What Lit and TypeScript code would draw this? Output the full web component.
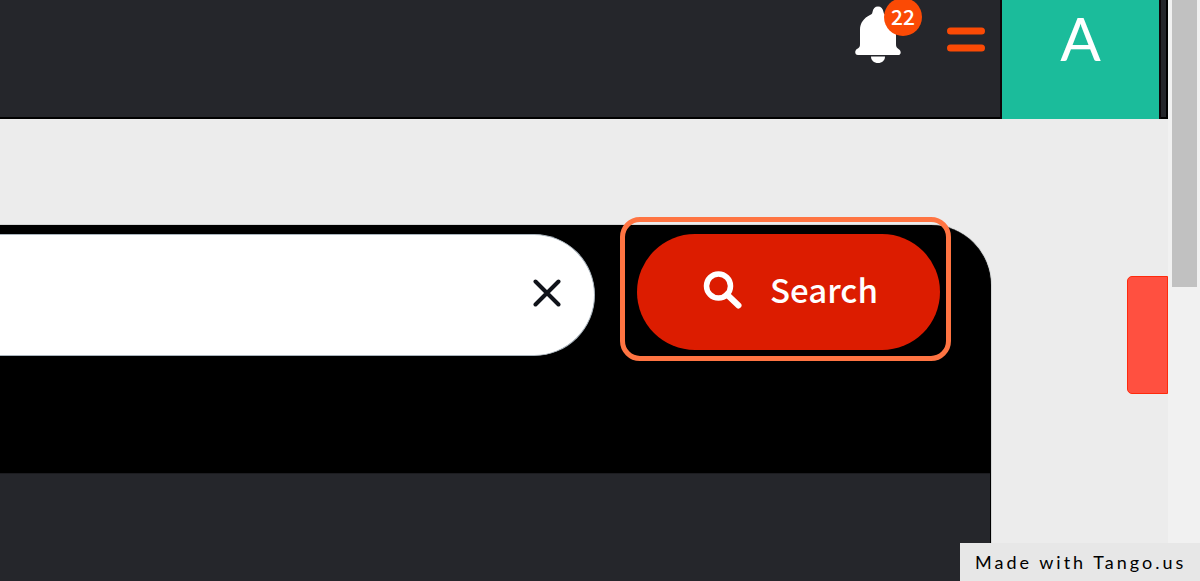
import { LitElement, html, css } from "lit";
import { customElement, property, state } from "lit/decorators.js";

@customElement("top-bar")
class TopBar extends LitElement {
  @property({ type: Number }) notifications = 22;
  @property() initial = "A";

  static styles = css`
    :host { display: block; }
    .bar {
      display: flex;
      justify-content: flex-end;
      height: 119px;
      box-sizing: border-box;
      padding-right: 5px;
      background: #25262b;
      border-bottom: 2px solid #000;
      border-right: 2px solid #000;
    }
    button {
      border: 0;
      padding: 0;
      margin: 0;
      background: none;
      cursor: pointer;
    }
    .bell {
      position: relative;
      width: 46px;
      height: 64px;
      margin-right: 46px;
    }
    .menu { width: 38px; height: 78px; margin-right: 15px; }
    svg { display: block; }
    .bell svg { margin-top: 6px; }
    .badge {
      position: absolute;
      left: 29px;
      top: -2px;
      width: 38px;
      height: 38px;
      border-radius: 50%;
      background: #fb4a05;
      color: #fff;
      font: 500 21px/36px "Noto Sans CJK SC", sans-serif;
      text-align: center;
    }
    .avatar {
      width: 161px;
      height: 119px;
      box-sizing: border-box;
      border: solid #0d0508;
      border-width: 0 2px;
      background: #1bbc9b;
      color: #fff;
      font: 400 60px/76px Lato, sans-serif;
      display: flex;
      justify-content: center;
      align-items: flex-start;
    }
  `;

  render() {
    return html`
      <header class="bar">
        <button class="bell" aria-label="Notifications">
          <svg width="46" height="58" viewBox="0 0 46 58" fill="#fff" aria-hidden="true">
            <path d="M23 0.500c-3 0-5 2-5.500 5.500-.3 1.800-1 2.300-2.500 3C9 12 5 17 5 23.500V38c0 2.500-.5 3.800-3 5C-.5 44.500-.5 49 3 49h40c3.500 0 3.500-4.500.5-6C41.500 41.800 41 40.500 41 38V23.500C41 17 37 12 31 9c-1.500-.7-2.200-1.200-2.500-3C28 2.500 26 .5 23 .5z" />
            <path d="M16 50.500h14c0 4-3 6.500-7 6.500s-7-2.500-7-6.500z" />
          </svg>
          <span class="badge">${this.notifications}</span>
        </button>
        <button class="menu" aria-label="Menu">
          <svg width="38" height="78" viewBox="0 0 38 78" stroke="#fb4a05" stroke-width="7" stroke-linecap="round" aria-hidden="true">
            <path d="M3.500 31h31M3.500 48h31" />
          </svg>
        </button>
        <button class="avatar" aria-label="Account ${this.initial}">${this.initial}</button>
      </header>
    `;
  }
}

@customElement("search-card")
class SearchCard extends LitElement {
  @state() private query = "";

  static styles = css`
    :host { display: flex; }
    .card {
      flex: 1;
      display: flex;
      flex-direction: column;
      background: #000;
      border-radius: 0 60px 0 0;
      border-right: 1px solid #000;
      box-shadow: 0 0 0 1px #d4d6d6;
      overflow: hidden;
    }
    .row {
      display: flex;
      align-items: flex-start;
      gap: 42px;
      height: 248px;
      box-sizing: border-box;
      padding: 9px 50px 0 0;
    }
    .field {
      flex: 1;
      display: flex;
      align-items: center;
      height: 122px;
      box-sizing: border-box;
      padding-right: 33px;
      background: #fff;
      border: 1px solid #a9b4bd;
      border-left: 0;
      border-radius: 0 61px 61px 0;
    }
    input {
      flex: 1;
      min-width: 0;
      height: 100px;
      border: 0;
      padding: 0 24px;
      outline: 0;
      background: none;
      font: 33px "Noto Sans CJK SC", sans-serif;
    }
    button { border: 0; padding: 0; cursor: pointer; }
    svg { display: block; }
    .clear { background: none; padding-bottom: 4px; }
    .search {
      display: flex;
      align-items: center;
      gap: 28px;
      width: 303px;
      height: 116px;
      padding-left: 66px;
      border-radius: 58px;
      background: #dc1c00;
      color: #fff;
      font: 500 33px/48px "Noto Sans CJK SC", sans-serif;
    }
    .search span { padding-bottom: 6px; }
    .search svg { margin-bottom: 4px; }
    .results { flex: 1; background: #25262b; border-top: 1px solid #1c1c20; }
  `;

  render() {
    return html`
      <section class="card">
        <form class="row" @submit=${(e: Event) => e.preventDefault()}>
          <div class="field">
            <input
              type="text"
              aria-label="Search"
              .value=${this.query}
              @input=${(e: Event) => (this.query = (e.target as HTMLInputElement).value)}
            />
            <button class="clear" type="button" aria-label="Clear" @click=${() => (this.query = "")}>
              <svg width="28" height="28" viewBox="0 0 28 28" stroke="#10131a" stroke-width="4" stroke-linecap="round" aria-hidden="true">
                <path d="M2.500 2.500l23 23M25.500 2.500l-23 23" />
              </svg>
            </button>
          </div>
          <button class="search" type="submit">
            <svg width="39" height="38" viewBox="0 0 39 38" fill="none" stroke="#fff" aria-hidden="true">
              <circle cx="15.500" cy="15" r="12" stroke-width="5.500" />
              <path d="M24 23.500L35.500 34.500" stroke-width="6" stroke-linecap="round" />
            </svg>
            <span>Search</span>
          </button>
        </form>
        <div class="results"></div>
      </section>
    `;
  }
}

@customElement("app-root")
class AppRoot extends LitElement {
  static styles = css`
    :host {
      display: grid;
      grid-template-columns: 1fr 32px;
      min-height: 100vh;
      position: relative;
      overflow: hidden;
      background: #ececec;
    }
    .page { display: flex; flex-direction: column; min-width: 0; }
    .content { flex: 1; display: flex; padding-top: 106px; gap: 136px; }
    .main { flex: 1; position: relative; display: flex; min-width: 0; }
    search-card { flex: 1; min-width: 0; }
    .highlight {
      position: absolute;
      top: -8px;
      right: 40px;
      width: 331px;
      height: 144px;
      box-sizing: border-box;
      border: 5px solid #ff7442;
      border-radius: 20px;
      pointer-events: none;
    }
    .tab {
      width: 41px;
      height: 118px;
      margin-top: 51px;
      padding: 0;
      box-sizing: border-box;
      background: #ff5040;
      border: 1px solid #ff2a0c;
      border-radius: 5px 0 0 5px;
    }
    .scroll { background: #f1f1f1; padding: 0 3px 0 4px; }
    .thumb { height: 287px; background: #c1c1c1; }
    .credit {
      position: absolute;
      right: 0;
      bottom: 0;
      width: 240px;
      height: 38px;
      box-sizing: border-box;
      padding-left: 15px;
      background: #e7e7e7;
      color: #000;
      font: 400 18px/38px Lato, sans-serif;
      letter-spacing: 3px;
      white-space: nowrap;
    }
  `;

  render() {
    return html`
      <div class="page">
        <top-bar></top-bar>
        <main class="content">
          <div class="main">
            <search-card></search-card>
            <div class="highlight"></div>
          </div>
          <button class="tab" aria-label="Feedback"></button>
        </main>
      </div>
      <div class="scroll"><div class="thumb"></div></div>
      <footer class="credit">Made with Tango.us</footer>
    `;
  }
}
